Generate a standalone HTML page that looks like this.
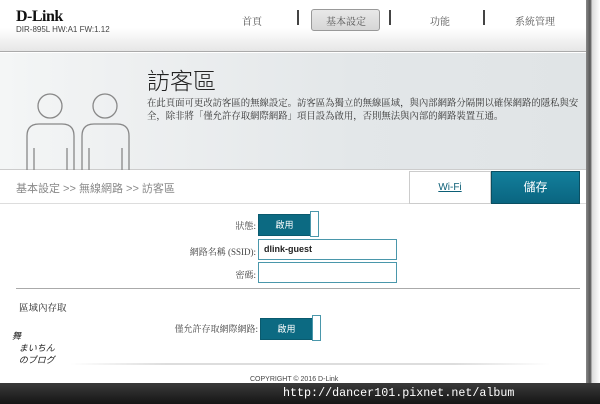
<!DOCTYPE html><html><head><meta charset="utf-8"><style>
*{margin:0;padding:0;box-sizing:border-box}
body{width:600px;height:404px;overflow:hidden;background:#fff;font-family:"Liberation Sans","Noto Sans CJK TC",sans-serif;position:relative;color:#333}
.abs{position:absolute}
.hdr{left:0;top:0;width:588px;height:52px;background:linear-gradient(#fff,#fff 55%,#e6e6e6);border-bottom:1px solid #aaa}
.ban{left:0;top:53px;width:588px;height:117px;background:linear-gradient(90deg,#f4f6f6 0,#eef0f1 20%,#e3e7e9 60%,#e0e4e6);border-bottom:1px solid #ccc}
.shadow{left:586px;top:0;width:14px;height:404px;background:linear-gradient(90deg,#888,#555 30%,#ddd 45%,#fff)}
.nav{font-size:10px;color:#555;top:13px;font-family:"Liberation Serif","Noto Serif CJK SC",serif}
.sep{top:10px;width:2px;height:15px;background:#444}
.lbl{font-size:9px;color:#444;text-align:right;font-family:"Liberation Serif","Noto Serif CJK SC",serif}
.tog{height:22px;background:#0c6a82;color:#fff;font-size:9px;text-align:center;line-height:20px;border:1px solid #0a5a6e}
.knob{width:9px;height:26px;border:1px solid #4a97ab;background:#fff}
.inp{height:21px;border:1px solid #4a97ab;background:#fff;font-size:9px;font-weight:bold;padding:4px 5px;color:#222}
</style></head><body>
<div class="abs hdr"></div>
<div class="abs" style="left:16px;top:8px;font:900 16px 'Liberation Serif',serif;color:#111;letter-spacing:-0.5px">D-Link</div>
<div class="abs" style="left:16px;top:25px;font-size:8px;color:#444">DIR-895L HW:A1 FW:1.12</div>
<div class="abs nav" style="left:242px">首頁</div>
<div class="abs sep" style="left:297px"></div>
<div class="abs" style="left:311px;top:9px;width:69px;height:22px;border:1px solid #999;border-radius:3px;background:linear-gradient(#e8e8e8,#d6d6d6)"></div>
<div class="abs nav" style="left:326px">基本設定</div>
<div class="abs sep" style="left:389px"></div>
<div class="abs nav" style="left:430px">功能</div>
<div class="abs sep" style="left:483px"></div>
<div class="abs nav" style="left:515px">系統管理</div>
<div class="abs ban"></div>
<svg class="abs" style="left:20px;top:88px" width="110" height="82" viewBox="0 0 110 82" fill="none" stroke="#888" stroke-width="1.3">
<circle cx="30" cy="18" r="12"/><circle cx="85" cy="18" r="12"/>
<path d="M7 82V48q0-12 12-12h23q12 0 12 12v34M14 82V60M47 82V60"/>
<path d="M62 82V48q0-12 12-12h23q12 0 12 12v34M69 82V60M102 82V60"/>
</svg>
<div class="abs" style="left:147px;top:62px;font-size:23px;color:#222;font-family:'Noto Sans CJK TC',sans-serif;font-weight:300">訪客區</div>
<div class="abs" style="left:147px;top:96px;width:436px;font-size:9.4px;line-height:13px;color:#333;font-family:'Noto Serif CJK SC',serif">在此頁面可更改訪客區的無線設定。訪客區為獨立的無線區域，與內部網路分隔開以確保網路的隱私與安全，除非將「僅允許存取網際網路」項目設為啟用，否則無法與內部的網路裝置互通。</div>
<div class="abs" style="left:0;top:203px;width:588px;height:1px;background:#ddd"></div>
<div class="abs" style="left:16px;top:180px;font-size:11px;color:#888">基本設定 &gt;&gt; 無線網路 &gt;&gt; 訪客區</div>
<div class="abs" style="left:409px;top:171px;width:82px;height:33px;border:1px solid #ccc;background:#fff;text-align:center;line-height:31px;font-size:10px;color:#0b5e76;text-decoration:underline">Wi-Fi</div>
<div class="abs" style="left:491px;top:171px;width:89px;height:33px;background:linear-gradient(#137f9c,#0a6580);color:#fff;text-align:center;line-height:31px;font-size:12px;border:1px solid #0a4f62">儲存</div>
<div class="abs lbl" style="left:180px;top:219px;width:76px">狀態:</div>
<div class="abs tog" style="left:258px;top:214px;width:53px">啟用</div>
<div class="abs knob" style="left:310px;top:211px"></div>
<div class="abs lbl" style="left:160px;top:245px;width:96px">網路名稱 (SSID):</div>
<div class="abs inp" style="left:258px;top:239px;width:139px">dlink-guest</div>
<div class="abs lbl" style="left:180px;top:268px;width:76px">密碼:</div>
<div class="abs inp" style="left:258px;top:262px;width:139px"></div>
<div class="abs" style="left:16px;top:288px;width:564px;height:1px;background:#aaa"></div>
<div class="abs" style="left:19px;top:300px;font-size:9.5px;color:#222;font-family:'Noto Serif CJK SC',serif">區域內存取</div>
<div class="abs lbl" style="left:150px;top:322px;width:108px">僅允許存取網際網路:</div>
<div class="abs tog" style="left:260px;top:318px;width:53px">啟用</div>
<div class="abs knob" style="left:312px;top:315px"></div>
<div class="abs" style="left:70px;top:363px;width:480px;height:2px;background:linear-gradient(90deg,#fff,#ddd 20%,#ddd 80%,#fff)"></div>
<div class="abs" style="left:250px;top:376px;font-size:7px;color:#444">COPYRIGHT © 2016 D-Link</div>
<div class="abs" style="left:12px;top:330px;font:italic 9px 'Liberation Serif',serif;color:#222;line-height:12px">舞<br>&nbsp;&nbsp;&nbsp;まいちん<br>&nbsp;&nbsp;&nbsp;のブログ</div>
<div class="abs shadow"></div>
<div class="abs" style="left:0;top:383px;width:600px;height:21px;background:linear-gradient(#3a3a3a,#151515)"></div>
<div class="abs" style="left:283px;top:386px;font:11.7px 'Liberation Mono',monospace;color:#fff">http://dancer101.pixnet.net/album</div>
</body></html>
